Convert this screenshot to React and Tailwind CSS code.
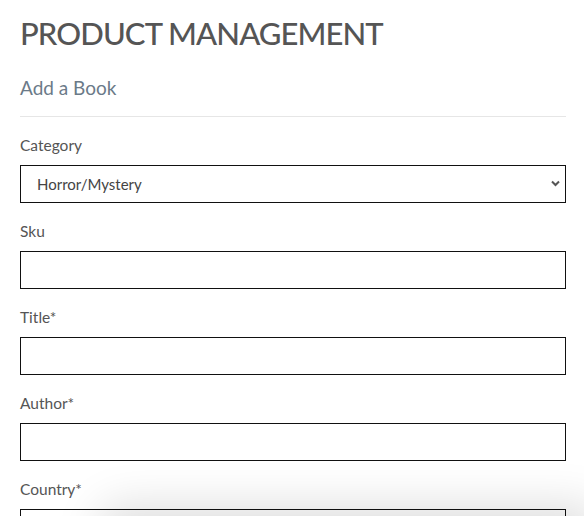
import React from "react";

function Field({ label, children }) {
  return (
    <div className="mb-4">
      <label className="block h-6 leading-6 mb-2 text-[15.5px] text-[#555]">{label}</label>
      {children}
    </div>
  );
}

export default function App() {
  return (
    <div className="min-h-screen bg-white pl-5 pr-[18px] pt-[10px]" style={{ fontFamily: "Lato, 'Open Sans', sans-serif" }}>
      <h1 className="text-[31px] leading-[46px] font-medium text-[#555] tracking-[-0.9px]">PRODUCT MANAGEMENT</h1>
      <h2 className="mt-[20px] text-[19px] leading-[24px] text-[#6b7a88]">Add a Book</h2>
      <div className="mt-[16px] mb-4 border-t border-[#e6e6e6]" />
      <Field label="Category">
        <div className="relative">
          <select defaultValue="h" className="appearance-none w-full h-[38px] border border-[#111] bg-white pl-4 text-[15px] text-[#444] outline-none">
            <option value="h">Horror/Mystery</option>
          </select>
          <svg className="absolute right-[6px] top-[15px]" width="9" height="7" viewBox="0 0 9 7">
            <path d="M1 1.5 L4.5 5 L8 1.5" fill="none" stroke="#555" strokeWidth="2" />
          </svg>
        </div>
      </Field>
      <Field label="Sku">
        <input className="w-full h-[38px] border border-[#111] outline-none" />
      </Field>
      <Field label="Title*">
        <input className="w-full h-[38px] border border-[#111] outline-none" />
      </Field>
      <Field label="Author*">
        <input className="w-full h-[38px] border border-[#111] outline-none" />
      </Field>
      <Field label="Country*">
        <input className="w-full h-[38px] border border-[#111] outline-none" />
      </Field>
      <div className="h-40" />
      <div className="fixed left-[110px] right-0 bottom-[-60px] h-[60px] bg-white rounded-tl-xl shadow-[0_0_45px_12px_rgba(0,0,0,0.13)]" />
    </div>
  );
}
